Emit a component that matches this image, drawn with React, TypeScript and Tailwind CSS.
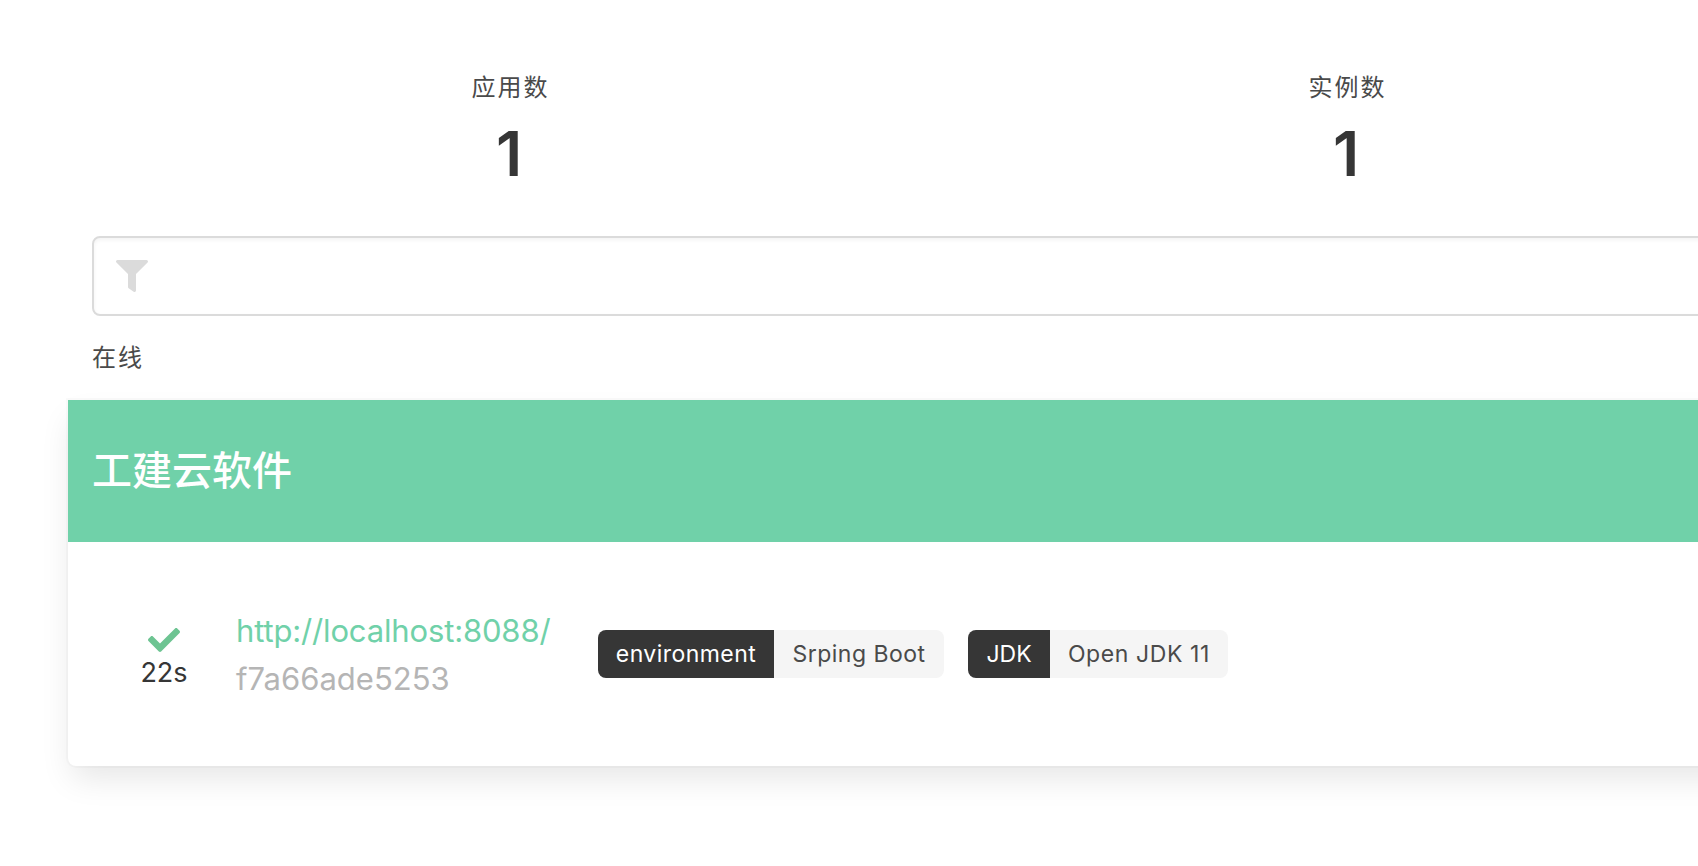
import { FaCheck, FaFilter } from "react-icons/fa";

interface StatProps {
  label: string;
  value: number;
}

interface TagProps {
  name: string;
  value: string;
  nameStyle: string;
  valueStyle: string;
}

const stats: StatProps[] = [
  { label: "应用数", value: 1 },
  { label: "实例数", value: 1 },
];

const tags: TagProps[] = [
  {
    name: "environment",
    value: "Srping Boot",
    nameStyle: "w-44 tracking-[0.45px]",
    valueStyle: "w-[170px] tracking-[0.5px]",
  },
  {
    name: "JDK",
    value: "Open JDK 11",
    nameStyle: "w-[82px]",
    valueStyle: "w-[178px] tracking-[0.6px]",
  },
];

function Stat({ label, value }: StatProps) {
  return (
    <div className="flex w-[837px] shrink-0 flex-col items-center">
      <p className="text-2xl leading-9 tracking-[2px] text-[#4a4a4a]">
        {label}
      </p>
      <p className="mt-3 pr-[3px] text-[62px] leading-[72px] font-semibold text-[#363636]">
        {value}
      </p>
    </div>
  );
}

function Tag({ name, value, nameStyle, valueStyle }: TagProps) {
  return (
    <div className="flex h-12 overflow-hidden rounded-lg text-[23px] leading-12 whitespace-nowrap">
      <span className={`bg-[#363636] text-center text-white ${nameStyle}`}>
        {name}
      </span>
      <span className={`bg-[#f5f5f5] text-center text-[#4a4a4a] ${valueStyle}`}>
        {value}
      </span>
    </div>
  );
}

export default function App() {
  return (
    <div className="h-[866px] w-full overflow-hidden bg-white pt-[70px] font-['Inter','Noto_Sans_CJK_SC',sans-serif]">
      <div className="ml-[92px] flex h-[166px]">
        {stats.map((stat) => (
          <Stat key={stat.label} {...stat} />
        ))}
      </div>

      <div className="ml-[92px] flex h-20 w-[1674px] items-center rounded-lg border-2 border-[#dbdbdb] pl-[22px] shadow-[inset_0_2px_4px_rgba(10,10,10,0.05)]">
        <FaFilter className="size-8 text-[#dbdbdb]" />
      </div>

      <p className="ml-[92px] flex h-[84px] items-center text-2xl tracking-[2px] text-[#4a4a4a]">
        在线
      </p>

      <div className="ml-[68px] h-[366px] w-[1722px] rounded-b-lg bg-white shadow-[0_16px_32px_-4px_rgba(10,10,10,0.1),0_0_0_2px_rgba(10,10,10,0.02)]">
        <div className="flex h-[142px] items-center bg-[#70d1a9] pb-px pl-6 text-[40px] font-medium text-white">
          工建云软件
        </div>

        <div className="flex h-56 items-center">
          <div className="ml-16 flex w-16 flex-col items-center pt-1">
            <FaCheck className="size-8 text-[#6dc492]" />
            <span className="pt-px text-[27px] leading-8 text-[#363636]">
              22s
            </span>
          </div>

          <div className="ml-10 flex w-[362px] flex-col pt-0.5 text-[31px] leading-12 whitespace-nowrap">
            <a href="#" className="tracking-[-0.15px] text-[#70d1a9]">
              http://localhost:8088/
            </a>
            <span className="text-[#b5b5b5]">f7a66ade5253</span>
          </div>

          <div className="flex gap-6">
            {tags.map((tag) => (
              <Tag key={tag.name} {...tag} />
            ))}
          </div>
        </div>
      </div>
    </div>
  );
}
